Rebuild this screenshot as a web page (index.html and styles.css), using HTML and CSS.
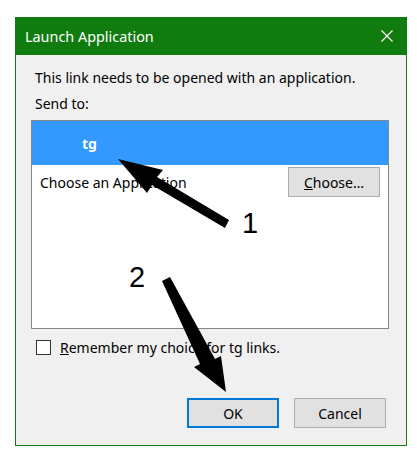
FILE: index.html
```html
<!DOCTYPE html>
<html lang="en">
<head>
<meta charset="utf-8">
<title>Launch Application</title>
<link rel="stylesheet" href="styles.css">
</head>
<body>
<div class="dialog">
  <div class="titlebar">
    <span class="title">Launch Application</span>
    <svg class="close" width="12" height="12" viewBox="0 0 12 12"><path d="M0.5 0.5 L11.5 11.5 M11.5 0.5 L0.5 11.5" stroke="#fff" stroke-width="1.2" fill="none"/></svg>
  </div>
  <div class="content">
    <p class="line intro">This link needs to be opened with an application.</p>
    <p class="line sendto">Send to:</p>
    <div class="list">
      <div class="row selected"><span class="appname">tg</span></div>
      <div class="row chooser">
        <span>Choose an Application</span>
        <button class="btn choose"><u>C</u>hoose…</button>
      </div>
    </div>
    <label class="remember">
      <span class="checkbox"></span>
      <span><u>R</u>emember my choice for tg links.</span>
    </label>
    <div class="actions">
      <button class="btn ok">OK</button>
      <button class="btn">Cancel</button>
    </div>
  </div>
</div>
<svg class="annotations" width="417" height="463" viewBox="0 0 417 463">
  <polygon points="118,159 163,170 157,177 229,220 225,228 152,185 147,193" fill="#000"/>
  <polygon points="162,281 170,277 215,359 221,356 226,392 194,367 200,364" fill="#000"/>
  <text x="242" y="233" class="num">1</text>
  <text x="129" y="287" class="num">2</text>
</svg>
</body>
</html>
```
FILE: styles.css
```css
html, body {
  margin: 0;
  padding: 0;
  background: #ffffff;
}
body {
  width: 417px;
  height: 463px;
  padding: 17px 0 0 15px;
  box-sizing: border-box;
  position: relative;
  font-family: "Noto Sans", "Open Sans", sans-serif;
  font-size: 14px;
  color: #000;
}
.dialog {
  width: 392px;
  height: 429px;
  box-sizing: border-box;
  border: 1px solid #107c10;
  border-top: none;
  background: #f0f0f0;
  display: flex;
  flex-direction: column;
}
.titlebar {
  height: 38px;
  background: #107c10;
  color: #fff;
  display: flex;
  align-items: center;
  justify-content: space-between;
  padding: 0 14px 0 9px;
  box-sizing: border-box;
  font-size: 14.4px;
  margin: 0 -1px;
}
.title {
  padding-left: 1px;
}
.close {
  display: block;
}
.content {
  display: flex;
  flex-direction: column;
  padding: 0 17px 0 15px;
}
.line {
  margin: 0;
  height: 20px;
  line-height: 20px;
  padding-left: 4px;
}
.intro {
  margin-top: 13px;
}
.sendto {
  margin-top: 6px;
}
.list {
  margin-top: 6px;
  height: 209px;
  box-sizing: border-box;
  border: 1px solid #828790;
  background: #fff;
  display: flex;
  flex-direction: column;
}
.row.selected {
  height: 44px;
  background: #3399ff;
  color: #fff;
  display: flex;
  align-items: center;
  padding-left: 50px;
  font-weight: bold;
}
.row.chooser {
  display: flex;
  align-items: center;
  justify-content: space-between;
  padding: 2px 8px 0 8px;
}
.btn {
  width: 92px;
  height: 30px;
  box-sizing: border-box;
  border: 1px solid #adadad;
  background: #e1e1e1;
  font-family: inherit;
  font-size: 14px;
  color: #000;
  padding: 0;
}
.btn.ok {
  border: 2px solid #0078d7;
}
.remember {
  display: flex;
  align-items: center;
  margin-top: 11px;
  padding-left: 5px;
  height: 15px;
  gap: 9px;
}
.checkbox {
  width: 15px;
  height: 15px;
  box-sizing: border-box;
  border: 1px solid #333;
  background: #fff;
}
.actions {
  display: flex;
  justify-content: flex-end;
  gap: 15px;
  margin-top: 43px;
  padding-right: 3px;
}
.annotations {
  position: absolute;
  left: 0;
  top: 0;
  pointer-events: none;
}
.num {
  font-family: "Liberation Sans", Arial, sans-serif;
  font-size: 29px;
  fill: #000;
}
```
